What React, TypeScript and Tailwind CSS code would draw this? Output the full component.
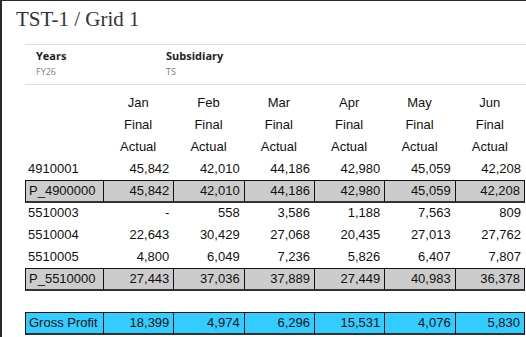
const months = ["Jan", "Feb", "Mar", "Apr", "May", "Jun"];

type Row = {
  label: string;
  values: string[];
  kind?: "plain" | "total" | "gross" | "blank";
};

const rows: Row[] = [
  { label: "4910001", values: ["45,842", "42,010", "44,186", "42,980", "45,059", "42,208"] },
  { label: "P_4900000", values: ["45,842", "42,010", "44,186", "42,980", "45,059", "42,208"], kind: "total" },
  { label: "5510003", values: ["-", "558", "3,586", "1,188", "7,563", "809"] },
  { label: "5510004", values: ["22,643", "30,429", "27,068", "20,435", "27,013", "27,762"] },
  { label: "5510005", values: ["4,800", "6,049", "7,236", "5,826", "6,407", "7,807"] },
  { label: "P_5510000", values: ["27,443", "37,036", "37,889", "27,449", "40,983", "36,378"], kind: "total" },
  { label: "", values: [], kind: "blank" },
  { label: "Gross Profit", values: ["18,399", "4,974", "6,296", "15,531", "4,076", "5,830"], kind: "gross" },
];

const gridCols = "grid grid-cols-[78px_repeat(6,70.33px)]";

function HeaderRow({ cells }: { cells: string[] }) {
  return (
    <div className={`${gridCols} h-[22px]`}>
      <div />
      {cells.map((c, i) => (
        <div key={i} className="flex items-center justify-center text-[#111]">
          {c}
        </div>
      ))}
    </div>
  );
}

function DataRow({ row }: { row: Row }) {
  if (row.kind === "blank") return <div className="h-[22px]" />;

  const boxed = row.kind === "total" || row.kind === "gross";
  const fill = row.kind === "gross" ? "bg-[#33ccff]" : row.kind === "total" ? "bg-[#cccccc]" : "";
  const cellBorder = boxed ? "border-l border-t border-b-2 border-t-[#111] border-l-[#111] border-b-[#333]" : "";

  return (
    <div className={`${gridCols} h-[22px]`}>
      <div className={`flex items-center pl-[3px] whitespace-nowrap ${fill} ${cellBorder}`}>
        {row.label}
      </div>
      {row.values.map((v, i) => (
        <div
          key={i}
          className={`flex items-center justify-end pr-[4px] ${fill} ${cellBorder} ${
            boxed && i === row.values.length - 1 ? "border-r border-r-[#111]" : ""
          }`}
        >
          {v}
        </div>
      ))}
    </div>
  );
}

function Filter({ name, value }: { name: string; value: string }) {
  return (
    <div className="w-[130px] pl-[11px] pt-[4px]">
      <div className="text-[11px] font-bold leading-[14px] text-[#222]">{name}</div>
      <div className="mt-[3px] text-[9px] leading-[12px] text-[#808080]">{value}</div>
    </div>
  );
}

export default function App() {
  return (
    <div className="h-[337px] w-[526px] overflow-hidden border-t border-l-2 border-[#2a2a2a] bg-white">
      <h1 className="pl-[14px] pt-[6px] font-['Liberation_Serif',serif] text-[21px] leading-[24px] text-[#333]">
        TST-1 / Grid 1
      </h1>

      <div className="ml-[23px] mt-[13px] flex h-[41px] border-y border-[#dedede] font-['Open_Sans',sans-serif]">
        <Filter name="Years" value="FY26" />
        <Filter name="Subsidiary" value="TS" />
      </div>

      <div className="ml-[23px] mt-[7px] font-['Liberation_Sans',Arial,sans-serif] text-[13px] text-[#111]">
        <HeaderRow cells={months} />
        <HeaderRow cells={months.map(() => "Final")} />
        <HeaderRow cells={months.map(() => "Actual")} />
        {rows.map((r, i) => (
          <DataRow key={i} row={r} />
        ))}
      </div>
    </div>
  );
}
